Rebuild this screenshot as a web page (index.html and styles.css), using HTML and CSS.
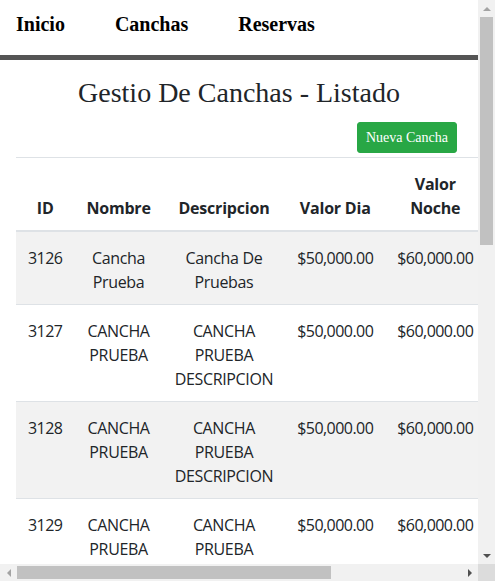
FILE: index.html
```html
<!DOCTYPE html>
<html lang="es">
<head>
<meta charset="utf-8">
<title>Gestio De Canchas - Listado</title>
<link rel="stylesheet" href="styles.css">
</head>
<body>
<div class="window">
  <div class="viewport">
    <nav class="topnav">
      <a class="nav-link" href="#">Inicio</a>
      <a class="nav-link" href="#">Canchas</a>
      <a class="nav-link" href="#">Reservas</a>
    </nav>
    <main class="page">
      <h1 class="title">Gestio De Canchas - Listado</h1>
      <div class="toolbar">
        <a class="btn btn-success" href="#">Nueva Cancha</a>
      </div>
      <table class="table">
        <thead>
          <tr>
            <th>ID</th>
            <th>Nombre</th>
            <th>Descripcion</th>
            <th>Valor Dia</th>
            <th>Valor Noche</th>
          </tr>
        </thead>
        <tbody>
          <tr>
            <td class="num">3126</td><td>Cancha Prueba</td><td>Cancha De Pruebas</td><td class="num">$50,000.00</td><td class="num">$60,000.00</td>
          </tr>
          <tr>
            <td class="num">3127</td><td>CANCHA PRUEBA</td><td>CANCHA PRUEBA DESCRIPCION</td><td class="num">$50,000.00</td><td class="num">$60,000.00</td>
          </tr>
          <tr>
            <td class="num">3128</td><td>CANCHA PRUEBA</td><td>CANCHA PRUEBA DESCRIPCION</td><td class="num">$50,000.00</td><td class="num">$60,000.00</td>
          </tr>
          <tr>
            <td class="num">3129</td><td>CANCHA PRUEBA</td><td>CANCHA PRUEBA DESCRIPCION</td><td class="num">$50,000.00</td><td class="num">$60,000.00</td>
          </tr>
        </tbody>
      </table>
    </main>
  </div>
  <div class="vscroll">
    <div class="sb-btn"><span class="tri tri-up"></span></div>
    <div class="vtrack"><div class="vthumb"></div></div>
    <div class="sb-btn"><span class="tri tri-down"></span></div>
  </div>
  <div class="hscroll">
    <div class="sb-btn"><span class="tri tri-left"></span></div>
    <div class="htrack"><div class="hthumb"></div></div>
    <div class="sb-btn"><span class="tri tri-right"></span></div>
  </div>
  <div class="corner"></div>
</div>
</body>
</html>
```

FILE: styles.css
```css
html, body {
  margin: 0;
  padding: 0;
  overflow: hidden;
}

body {
  font-family: "Liberation Serif", "Times New Roman", serif;
  color: #212529;
  background: #fff;
}

.window {
  display: grid;
  grid-template-columns: 478px 17px;
  grid-template-rows: 564px 17px;
  width: 495px;
  height: 581px;
}

.viewport {
  overflow: hidden;
  min-width: 0;
}

.topnav {
  display: flex;
  gap: 50px;
  padding: 13px 16px 19px;
  line-height: 23px;
  border-bottom: 5px solid #555555;
}

.nav-link {
  font-weight: bold;
  font-size: 20px;
  color: #000;
  text-decoration: none;
}

.page {
  padding: 0 16px 20px;
}

.title {
  margin: 17px 0 0;
  font-size: 28px;
  line-height: 32px;
  font-weight: normal;
  text-align: center;
  color: #212529;
}

.toolbar {
  display: flex;
  justify-content: flex-end;
  margin-top: 13px;
  padding-right: 5px;
}

.btn {
  display: inline-block;
  padding: 4px 8px;
  font-family: "Liberation Serif", "Times New Roman", serif;
  font-size: 14px;
  line-height: 21px;
  border: 1px solid transparent;
  border-radius: 3px;
  color: #fff;
  text-decoration: none;
}

.btn-success {
  background: #28a745;
  border-color: #28a745;
}

.table {
  width: 100%;
  margin-top: 4px;
  margin-bottom: 16px;
  border-collapse: collapse;
  font-family: "Open Sans", "Noto Sans", sans-serif;
  font-size: 16px;
  line-height: 24px;
  color: #212529;
}

.table th,
.table td {
  padding: 14px 12px 10px;
  text-align: center;
  vertical-align: top;
  border-top: 1px solid #dee2e6;
}

.table td {
  letter-spacing: -0.35px;
}

.table td.num {
  letter-spacing: -0.55px;
}

.table thead th {
  vertical-align: bottom;
  border-bottom: 2px solid #dee2e6;
  font-weight: bold;
  letter-spacing: -0.2px;
}

.table tbody tr:nth-child(odd) {
  background: #f2f2f2;
}

/* simulated browser scrollbars */
.vscroll {
  display: flex;
  flex-direction: column;
  background: #f1f1f1;
}

.hscroll {
  display: flex;
  background: #f1f1f1;
}

.corner {
  background: #dcdcdc;
}

.sb-btn {
  flex: 0 0 17px;
  width: 17px;
  height: 17px;
  display: flex;
  align-items: center;
  justify-content: center;
}

.vtrack {
  flex: 1;
  padding: 0 2px;
}

.vthumb {
  height: 228px;
  background: #c1c1c1;
}

.htrack {
  flex: 1;
  padding: 2px 0;
}

.hthumb {
  width: 314px;
  height: 13px;
  background: #c1c1c1;
}

.tri {
  width: 0;
  height: 0;
  display: block;
}

.tri-up {
  border-left: 4px solid transparent;
  border-right: 4px solid transparent;
  border-bottom: 4px solid #a3a3a3;
}

.tri-down {
  border-left: 4px solid transparent;
  border-right: 4px solid transparent;
  border-top: 4px solid #505050;
}

.tri-left {
  border-top: 4px solid transparent;
  border-bottom: 4px solid transparent;
  border-right: 4px solid #a3a3a3;
}

.tri-right {
  border-top: 4px solid transparent;
  border-bottom: 4px solid transparent;
  border-left: 4px solid #505050;
}
```
